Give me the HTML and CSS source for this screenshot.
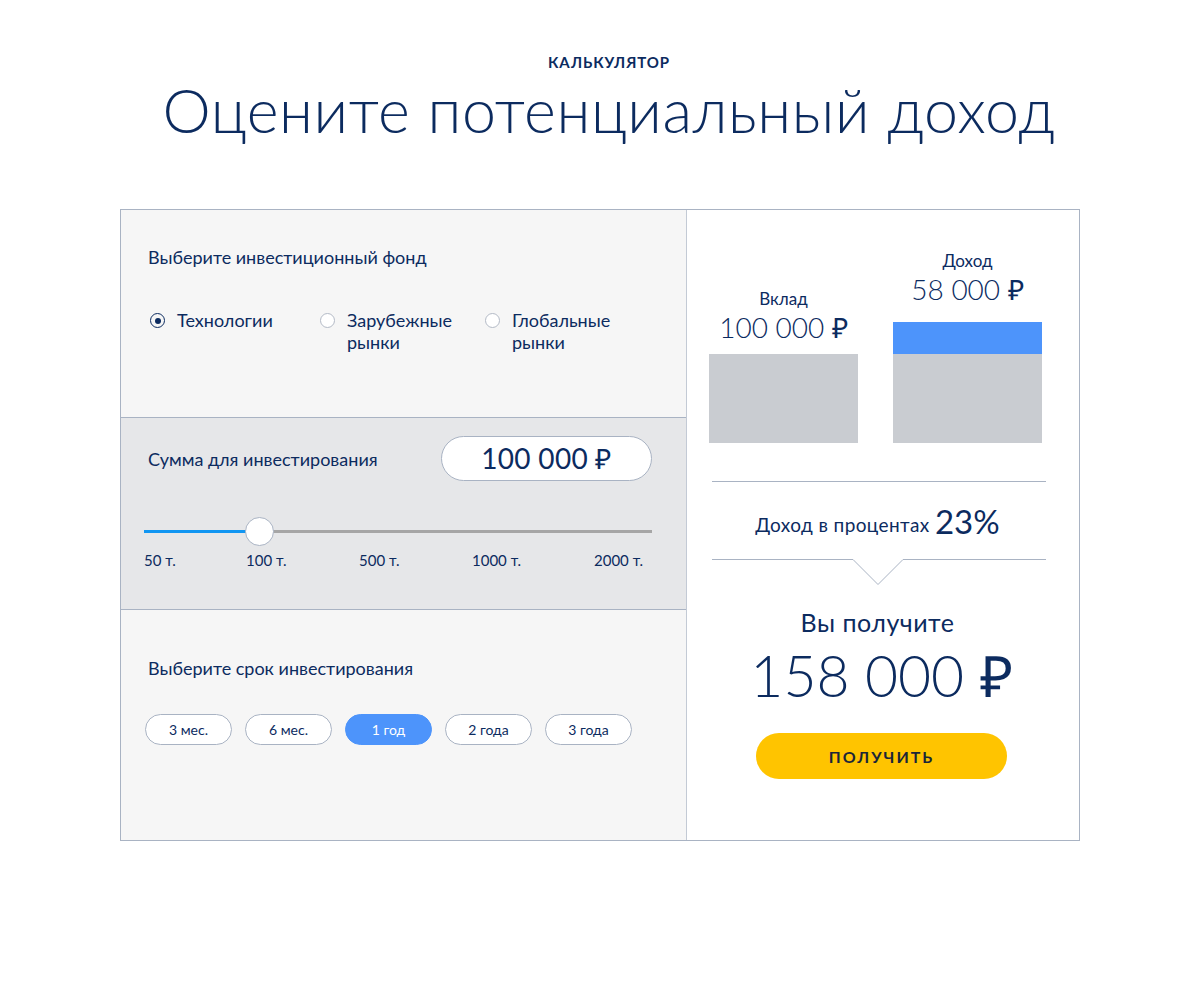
FILE: index.html
```html
<!DOCTYPE html>
<html lang="ru">
<head>
<meta charset="utf-8">
<title>Калькулятор</title>
<link rel="stylesheet" href="styles.css">
</head>
<body>
<header class="intro">
  <div class="eyebrow">КАЛЬКУЛЯТОР</div>
  <h1 class="title">Оцените потенциальный доход</h1>
</header>

<main class="calc">
  <div class="calc-left">
    <section class="sec sec-fund">
      <div class="sec-label">Выберите инвестиционный фонд</div>
      <div class="radios">
        <label class="radio radio--on"><span class="radio-dot"></span><span class="radio-text">Технологии</span></label>
        <label class="radio"><span class="radio-dot"></span><span class="radio-text">Зарубежные<br>рынки</span></label>
        <label class="radio"><span class="radio-dot"></span><span class="radio-text">Глобальные<br>рынки</span></label>
      </div>
    </section>

    <section class="sec sec-sum">
      <div class="sum-row">
        <div class="sec-label">Сумма для инвестирования</div>
        <div class="sum-input">100 000 ₽</div>
      </div>
      <div class="slider">
        <div class="track">
          <div class="track-fill" style="width: 22.6%"></div>
          <div class="thumb" style="left: 22.6%"></div>
        </div>
        <div class="ticks">
          <span>50 т.</span>
          <span>100 т.</span>
          <span>500 т.</span>
          <span>1000 т.</span>
          <span>2000 т.</span>
        </div>
      </div>
    </section>

    <section class="sec sec-term">
      <div class="sec-label">Выберите срок инвестирования</div>
      <div class="pills">
        <button class="pill">3 мес.</button>
        <button class="pill">6 мес.</button>
        <button class="pill pill--on">1 год</button>
        <button class="pill">2 года</button>
        <button class="pill">3 года</button>
      </div>
    </section>
  </div>

  <div class="calc-right">
    <div class="bars">
      <div class="bar-col">
        <div class="bar-label">Вклад</div>
        <div class="bar-value">100 000 ₽</div>
        <div class="bar">
          <div class="bar-base"></div>
        </div>
      </div>
      <div class="bar-col bar-col--income">
        <div class="bar-label">Доход</div>
        <div class="bar-value">58 000 ₽</div>
        <div class="bar">
          <div class="bar-extra"></div>
          <div class="bar-base"></div>
        </div>
      </div>
    </div>

    <div class="rule"></div>
    <div class="percent">Доход в процентах <span class="percent-num">23%</span></div>
    <svg class="notch" width="334" height="27" viewBox="0 0 334 27">
      <polyline points="0,0.5 141,0.5 166,25.5 191,0.5 334,0.5" fill="none" stroke="#a9b3c3" stroke-width="1"/>
    </svg>

    <div class="result-label">Вы получите</div>
    <div class="result-value">158 000 ₽</div>
    <button class="cta">ПОЛУЧИТЬ</button>
  </div>
</main>
</body>
</html>
```

FILE: styles.css
```css
* { box-sizing: border-box; }

body {
  margin: 0;
  background: #ffffff;
  color: #0c2b5f;
  font-family: "Lato", "Open Sans", sans-serif;
}

.intro {
  text-align: center;
  padding-top: 53px;
  padding-left: 18px;
  height: 209px;
}

.eyebrow {
  font-size: 15px;
  font-weight: 700;
  letter-spacing: 0.9px;
  line-height: 18px;
}

.title {
  margin: 3px 0 0;
  font-size: 61px;
  font-weight: 300;
  line-height: 72px;
  letter-spacing: 0.6px;
}

.calc {
  width: 960px;
  height: 632px;
  margin: 0 auto;
  border: 1px solid #a9b3c3;
  display: grid;
  grid-template-columns: 566px 1fr;
}

.calc-left {
  border-right: 1px solid #c3cad5;
  display: flex;
  flex-direction: column;
}

.sec {
  padding-left: 27px;
  background: #f6f6f6;
}

.sec-label {
  font-size: 18px;
  line-height: 24px;
}

.sec-fund {
  height: 207px;
  padding-top: 35px;
}

.radios {
  margin-top: 40px;
  display: flex;
}

.radio {
  display: flex;
  align-items: flex-start;
  font-size: 18px;
  line-height: 22px;
}
.radio:nth-child(1) { width: 170px; }
.radio:nth-child(2) { width: 165px; }

.radio-dot {
  width: 15px;
  height: 15px;
  margin: 4px 12px 0 2px;
  border: 1px solid #b3bac6;
  border-radius: 50%;
  background: #ffffff;
  flex: none;
  display: flex;
  align-items: center;
  justify-content: center;
}

.radio--on .radio-dot {
  border: 1.5px solid #0c2b5f;
  background: #f6f6f6;
}
.radio--on .radio-dot::after {
  content: "";
  width: 6px;
  height: 6px;
  border-radius: 50%;
  background: #0c2b5f;
}

.sec-sum {
  height: 193px;
  background: #e6e7e9;
  border-top: 1px solid #a9b3c3;
  border-bottom: 1px solid #a9b3c3;
  padding-top: 18px;
  padding-right: 34px;
}

.sum-row {
  display: flex;
  justify-content: space-between;
  align-items: center;
}

.sum-input {
  width: 211px;
  height: 45px;
  border: 1px solid #a9b3c3;
  border-radius: 23px;
  background: #ffffff;
  font-size: 28px;
  font-weight: 400;
  text-align: center;
  line-height: 43px;
  letter-spacing: 0.3px;
}

.slider {
  margin-left: -4px;
  margin-top: 49px;
}

.track {
  position: relative;
  height: 3px;
  background: #a6a6a6;
}

.track-fill {
  height: 3px;
  background: #1196f2;
}

.thumb {
  position: absolute;
  top: -13px;
  width: 29px;
  height: 29px;
  margin-left: -14px;
  border-radius: 50%;
  background: #ffffff;
  border: 1px solid #a9b3c3;
}

.ticks {
  margin-top: 18px;
  display: grid;
  grid-template-columns: 102px 113px 113px 122px auto;
  font-size: 15px;
  line-height: 18px;
}

.sec-term {
  flex: 1;
  padding-top: 46px;
}

.pills {
  margin-top: 34px;
  margin-left: -3px;
  display: flex;
  gap: 13px;
}

.pill {
  width: 87px;
  height: 31px;
  border: 1px solid #a9b3c3;
  border-radius: 16px;
  background: #ffffff;
  color: #0c2b5f;
  font-family: inherit;
  font-size: 14px;
  padding: 0;
  padding-bottom: 1px;
}

.pill--on {
  background: #4d94fb;
  border-color: #4d94fb;
  color: #ffffff;
}

.calc-right {
  padding: 40px 35px 0 22px;
  display: flex;
  flex-direction: column;
  align-items: center;
}

.bars {
  align-self: stretch;
  display: flex;
  align-items: flex-end;
  gap: 35px;
}

.bar-col {
  width: 149px;
  text-align: center;
}

.bar-label {
  font-size: 17px;
  line-height: 22px;
}

.bar-value {
  font-size: 28px;
  font-weight: 300;
  line-height: 34px;
  margin-bottom: 10px;
}

.bar-col--income .bar-value { margin-bottom: 16px; }

.bar-base {
  height: 89px;
  background: #c9ccd1;
}

.bar-extra {
  height: 32px;
  background: #4d94fb;
}

.rule {
  align-self: stretch;
  margin: 38px 0 0 3px;
  height: 1px;
  background: #a9b3c3;
}

.percent {
  margin-top: 21px;
  font-size: 19px;
  letter-spacing: 0.4px;
  line-height: 36px;
  height: 37px;
}

.percent-num {
  font-size: 33px;
  font-weight: 400;
  letter-spacing: 0;
  vertical-align: -2px;
}

.notch {
  align-self: flex-start;
  margin-left: 3px;
  margin-top: 19px;
  display: block;
}

.result-label {
  margin-top: 21px;
  font-size: 25px;
  line-height: 30px;
  letter-spacing: 0.5px;
}

.result-value {
  margin-top: 6px;
  margin-left: 8px;
  font-size: 57px;
  font-weight: 300;
  line-height: 64px;
  letter-spacing: 0;
}

.cta {
  margin-top: 26px;
  margin-left: 8px;
  width: 251px;
  height: 46px;
  border: none;
  border-radius: 23px;
  background: #ffc400;
  color: #1b2638;
  font-family: inherit;
  font-size: 16px;
  font-weight: 700;
  letter-spacing: 2px;
}
```
